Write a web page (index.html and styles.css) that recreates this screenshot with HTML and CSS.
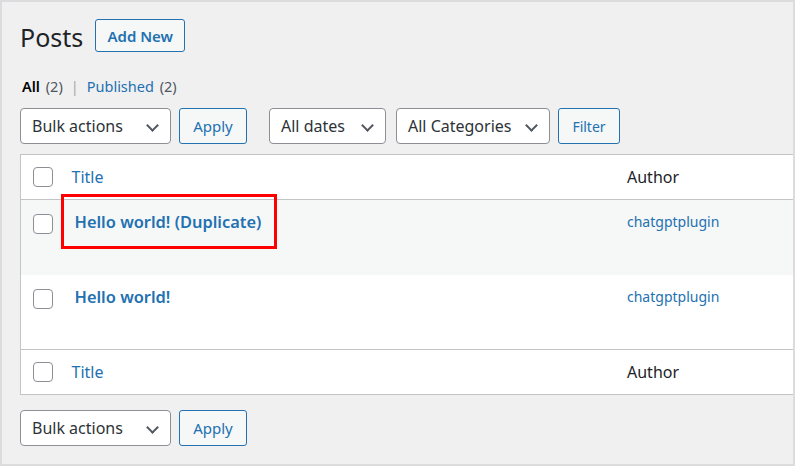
FILE: index.html
```html
<!DOCTYPE html>
<html lang="en">
<head>
    <meta charset="UTF-8">
    <meta name="viewport" content="width=device-width, initial-scale=1.0">
    <title>Posts</title>
    <link rel="stylesheet" href="styles.css">
</head>
<body>

    <div class="wrap">
        <div class="page-head">
            <h1>Posts</h1>
            <a href="#" class="btn btn-add">Add New</a>
        </div>

        <ul class="subsubsub">
            <li><a href="#" class="current">All <span class="count">(2)</span></a></li>
            <li class="sep">|</li>
            <li><a href="#">Published <span class="count">(2)</span></a></li>
        </ul>

        <div class="tablenav">
            <div class="select select-bulk">Bulk actions</div>
            <button class="btn">Apply</button>
            <div class="select select-dates">All dates</div>
            <div class="select select-cats">All Categories</div>
            <button class="btn btn-filter">Filter</button>
        </div>

        <table class="posts">
            <thead>
                <tr>
                    <td class="check"><span class="box"></span></td>
                    <th class="title">Title</th>
                    <th class="author">Author</th>
                </tr>
            </thead>
            <tbody>
                <tr class="alt">
                    <td class="check"><span class="box"></span></td>
                    <td class="title"><a href="#" class="row-title marked">Hello world! (Duplicate)</a></td>
                    <td class="author"><a href="#">chatgptplugin</a></td>
                </tr>
                <tr>
                    <td class="check"><span class="box"></span></td>
                    <td class="title"><a href="#" class="row-title">Hello world!</a></td>
                    <td class="author"><a href="#">chatgptplugin</a></td>
                </tr>
            </tbody>
            <tfoot>
                <tr>
                    <td class="check"><span class="box"></span></td>
                    <th class="title">Title</th>
                    <th class="author">Author</th>
                </tr>
            </tfoot>
        </table>

        <div class="tablenav bottom">
            <div class="select select-bulk">Bulk actions</div>
            <button class="btn">Apply</button>
        </div>
    </div>

</body>
</html>
```

FILE: styles.css
```css
* {
    box-sizing: border-box;
}
body {
    font-family: "Noto Sans", "Open Sans", sans-serif;
    background-color: #f0f0f1;
    color: #1d2327;
    margin: 0;
    height: 466px;
    border: 2px solid #dcdcde;
    overflow: hidden;
}
a {
    color: #2271b1;
    text-decoration: none;
}
.wrap {
    padding: 18px 0 0 18px;
}
.page-head {
    display: flex;
    align-items: center;
    gap: 12px;
}
h1 {
    margin: 0;
    font-size: 25px;
    font-weight: 400;
    color: #1d2327;
}
.btn {
    font-family: inherit;
    display: inline-flex;
    align-items: center;
    justify-content: center;
    height: 36px;
    padding: 0 14px;
    font-size: 15px;
    color: #2271b1;
    background-color: #f6f7f7;
    border: 1px solid #2271b1;
    border-radius: 3px;
}
.btn-add {
    height: 33px;
    width: 90px;
    margin-top: -3px;
    font-weight: 600;
    padding: 0;
}
.btn-filter {
    font-size: 14px;
    padding: 0 12px;
}
.subsubsub {
    list-style: none;
    display: flex;
    gap: 8px;
    margin: 22px 0 0 2px;
    padding: 0;
    font-size: 14.5px;
    color: #50575e;
}
.subsubsub .current {
    color: #000;
    font-weight: 600;
}
.subsubsub .count {
    color: #50575e;
    font-weight: 400;
    margin-left: 2px;
}
.subsubsub .sep {
    color: #a7aaad;
}
.tablenav {
    display: flex;
    gap: 8px;
    margin-top: 12px;
}
.select {
    position: relative;
    height: 36px;
    padding: 0 30px 0 11px;
    display: flex;
    align-items: center;
    font-size: 16px;
    color: #2c3338;
    background-color: #fff;
    border: 1px solid #8c8f94;
    border-radius: 4px;
}
.select::after {
    content: "";
    position: absolute;
    right: 13px;
    top: 12px;
    width: 7px;
    height: 7px;
    border-right: 2px solid #50575e;
    border-bottom: 2px solid #50575e;
    transform: rotate(45deg);
}
.select-bulk {
    width: 151px;
}
.select-dates {
    width: 117px;
    margin-left: 14px;
}
.select-cats {
    width: 154px;
    margin-left: 2px;
}
.tablenav .btn {
    width: 68px;
    padding: 0;
}
.tablenav .btn-filter {
    width: 62px;
}
.posts {
    width: 100%;
    margin-top: 10px;
    border-collapse: collapse;
    background-color: #fff;
    border: 1px solid #c3c4c7;
    border-right: none;
}
.posts th, .posts td {
    text-align: left;
    font-weight: 400;
    vertical-align: top;
    padding: 0;
}
.posts thead tr {
    border-bottom: 1px solid #c3c4c7;
}
.posts tfoot tr {
    border-top: 1px solid #c3c4c7;
}
.posts thead th, .posts tfoot th {
    height: 45px;
    vertical-align: middle;
    font-size: 16px;
}
.posts th.title {
    color: #2271b1;
}
.posts th.author {
    color: #1d2327;
}
.posts .check {
    width: 51px;
    padding-left: 12px;
    vertical-align: middle;
}
.posts tbody .check {
    vertical-align: top;
    padding-top: 14px;
}
.posts tbody td {
    height: 75px;
}
.posts tbody tr.alt {
    background-color: #f6f7f7;
}
.posts .author {
    width: 166px;
}
.posts tbody .author {
    padding-top: 12px;
    font-size: 14px;
}
.posts tbody .title {
    padding: 10px 0 0 3px;
}
.box {
    display: block;
    width: 20px;
    height: 20px;
    border: 1px solid #8c8f94;
    border-radius: 4px;
    background-color: #fff;
}
.row-title {
    position: relative;
    font-size: 16.4px;
    font-weight: 600;
}
.marked::after {
    content: "";
    position: absolute;
    left: -14px;
    top: -16px;
    right: -16px;
    bottom: -16px;
    border: 3px solid #ff0000;
}
.tablenav.bottom {
    margin-top: 15px;
}
```
